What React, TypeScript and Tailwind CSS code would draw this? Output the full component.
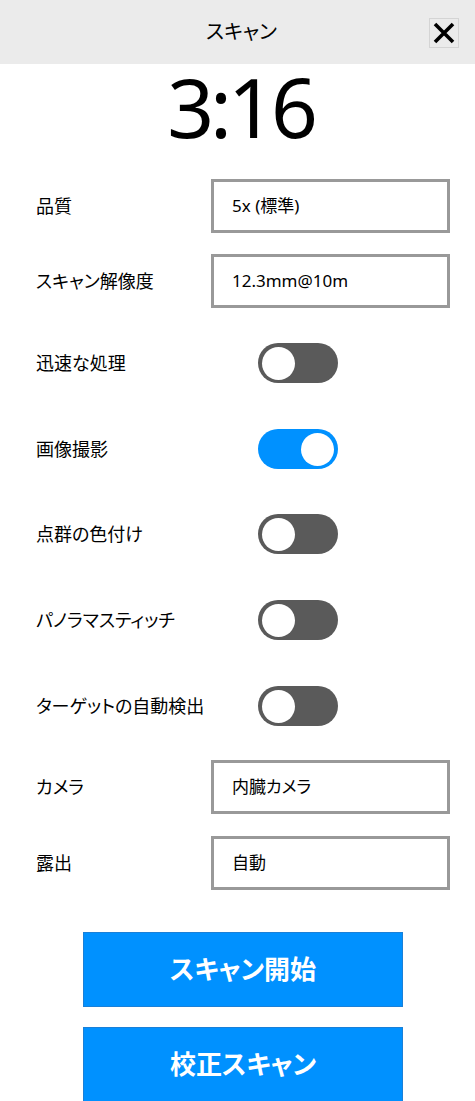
const font = { fontFamily: '"Noto Sans", "Noto Sans CJK JP", sans-serif' };

const SelectBox = ({ label, value, className }: { label: string; value: string; className: string }) => (
  <div className={`flex items-center ${className}`}>
    <div className="w-[211px] shrink-0 whitespace-nowrap pl-[36px] text-[18px] text-black">{label}</div>
    <div className="flex h-[54px] w-[239px] items-center border-[3px] border-[#999999] pl-[18px] text-[17px] text-black">
      {value}
    </div>
  </div>
);

const Toggle = ({ label, on, className }: { label: string; on: boolean; className: string }) => (
  <div className={`flex h-[40px] items-center ${className}`}>
    <div className="w-[211px] shrink-0 whitespace-nowrap pl-[36px] text-[18px] text-black">{label}</div>
    <div
      className={`ml-[47px] flex h-[40px] w-[80px] items-center rounded-full px-[4px] ${
        on ? 'justify-end bg-[#0091ff]' : 'justify-start bg-[#5a5a5a]'
      }`}
    >
      <div className="h-[33px] w-[33px] rounded-full bg-white" />
    </div>
  </div>
);

const App = () => {
  return (
    <div className="h-[1101px] w-[475px] overflow-hidden bg-white [font-feature-settings:'palt']" style={font}>
      <div className="relative flex h-[64px] items-center justify-center bg-[#ebebeb]">
        <span className="ml-[8px] text-[20px] text-black">スキャン</span>
        <div className="absolute left-[429px] top-[18px] flex h-[30px] w-[30px] items-center justify-center border border-[#d4d4d4]">
          <svg width="24" height="24" viewBox="0 0 24 24">
            <path d="M3 3 L21 21 M21 3 L3 21" stroke="#000" strokeWidth="3.6" />
          </svg>
        </div>
      </div>

      <div className="mt-[1px] pl-[6px] text-center text-[82px] leading-none tracking-[-4px] text-black">3:16</div>

      <SelectBox label="品質" value="5x (標準)" className="mt-[32px]" />
      <SelectBox label="スキャン解像度" value="12.3mm@10m" className="mt-[21px]" />

      <Toggle label="迅速な処理" on={false} className="mt-[35px]" />
      <Toggle label="画像撮影" on={true} className="mt-[46px]" />
      <Toggle label="点群の色付け" on={false} className="mt-[45px]" />
      <Toggle label="パノラマスティッチ" on={false} className="mt-[46px]" />
      <Toggle label="ターゲットの自動検出" on={false} className="mt-[46px]" />

      <SelectBox label="カメラ" value="内臓カメラ" className="mt-[34px]" />
      <SelectBox label="露出" value="自動" className="mt-[22px]" />

      <div className="mt-[42px] ml-[83px] flex flex-col gap-[20px]">
        <button className="h-[75px] w-[320px] border border-[#1a80d8] bg-[#0091ff] text-[26px] font-bold text-white">
          スキャン開始
        </button>
        <button className="h-[75px] w-[320px] border border-[#1a80d8] bg-[#0091ff] text-[26px] font-bold text-white">
          校正スキャン
        </button>
      </div>
    </div>
  );
};

export default App;
